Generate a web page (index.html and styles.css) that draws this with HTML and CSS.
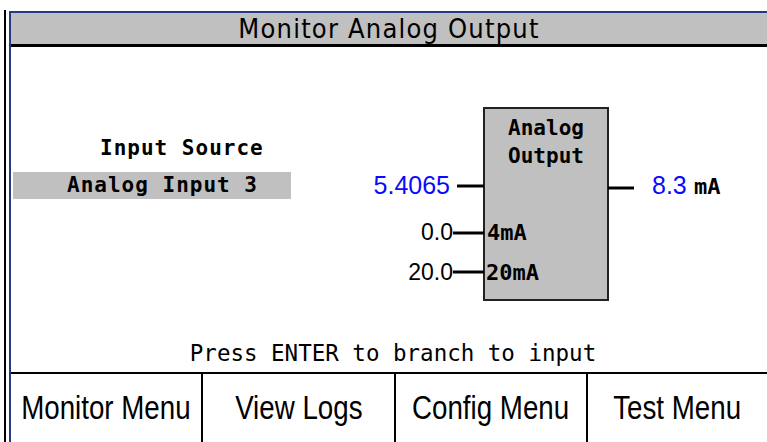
FILE: index.html
```html
<!DOCTYPE html>
<html>
<head>
    <title>Monitor Analog Output</title>
    <link rel="stylesheet" href="styles.css">
</head>
<body>
    <div class="device">
        <div class="screen">
            <div class="title">Monitor Analog Output</div>

            <div class="main">
                <div class="content">
                    <div class="source">
                        <div class="source-label">Input Source</div>
                        <div class="source-value">Analog Input 3</div>
                    </div>

                    <!-- function block: input -> analog output -> mA -->
                    <svg class="diagram" width="476" height="270" viewBox="0 0 476 270">
                        <rect class="block" x="193" y="61" width="124" height="192" />
                        <text class="label" x="255" y="88" text-anchor="middle">Analog</text>
                        <text class="label" x="255" y="116" text-anchor="middle">Output</text>

                        <line class="wire" x1="166" y1="139" x2="193" y2="139" />
                        <text class="num live" x="159" y="147" text-anchor="end">5.4065</text>

                        <line class="wire" x1="317" y1="141" x2="343" y2="141" />
                        <text class="num live" x="361" y="147">8.3</text>
                        <text class="unit" x="403" y="147">mA</text>

                        <line class="wire" x1="162" y1="186" x2="193" y2="186" />
                        <text class="num small" x="162" y="193" text-anchor="end">0.0</text>
                        <text class="unit" x="196" y="193">4mA</text>

                        <line class="wire" x1="162" y1="225" x2="193" y2="225" />
                        <text class="num small" x="162" y="233" text-anchor="end">20.0</text>
                        <text class="unit" x="195" y="233">20mA</text>
                    </svg>
                </div>
                <div class="prompt">Press ENTER to branch to input</div>
            </div>

            <div class="softkeys">
                <div class="key"><span>Monitor Menu</span></div>
                <div class="key"><span>View Logs</span></div>
                <div class="key"><span>Config Menu</span></div>
                <div class="key"><span>Test Menu</span></div>
            </div>
        </div>
    </div>
</body>
</html>
```

FILE: styles.css
```css
body {
    margin: 0;
    background: #fff;
    overflow: hidden;
    font-family: "DejaVu Sans Mono", monospace;
    color: #000;
}

.device {
    margin: 10px 0 0 4px;
    padding: 1px 0 0 3px;
    height: 432px;
    box-sizing: border-box;
    border-left: 2px solid #000;
}

.screen {
    height: 431px;
    box-sizing: border-box;
    border-left: 2px solid #24398a;
    border-top: 2px solid #24398a;
    display: flex;
    flex-direction: column;
}

.title {
    height: 31px;
    line-height: 31px;
    background: #c0c0c0;
    border-bottom: 3px solid #000;
    text-align: center;
    font-family: "DejaVu Sans Condensed", "DejaVu Sans", sans-serif;
    font-size: 27px;
    letter-spacing: 1.2px;
}

.main {
    height: 325px;
    flex-shrink: 0;
    border-bottom: 2px solid #000;
    display: flex;
    flex-direction: column;
}

.content {
    flex: 1;
    display: flex;
}

.source {
    width: 280px;
    flex-shrink: 0;
    padding-top: 89px;
    font-size: 21px;
    font-weight: bold;
    letter-spacing: 1px;
}

.source-label {
    padding-left: 89px;
    line-height: 24px;
}

.source-value {
    margin: 12px 0 0 2px;
    width: 278px;
    height: 27px;
    line-height: 27px;
    padding-left: 54px;
    box-sizing: border-box;
    background: #c0c0c0;
}

.diagram {
    display: block;
}

.block {
    fill: #c0c0c0;
    stroke: #222;
    stroke-width: 2;
}

.wire {
    stroke: #000;
    stroke-width: 3;
}

.label {
    font-family: "DejaVu Sans Mono", monospace;
    font-size: 21px;
    font-weight: bold;
}

.unit {
    font-family: "DejaVu Sans Mono", monospace;
    font-size: 22px;
    font-weight: bold;
}

.num {
    font-family: "Liberation Sans", Arial, sans-serif;
}

.live {
    font-size: 25px;
    fill: #0a0aff;
}

.small {
    font-size: 23px;
}

.prompt {
    line-height: 24px;
    padding: 0 0 7px 8px;
    text-align: center;
    font-size: 22.5px;
}

.softkeys {
    flex: 1;
    display: grid;
    grid-template-columns: 190px 193px 192px 1fr;
}

.key {
    text-align: center;
    line-height: 68px;
    font-family: "Liberation Sans", Arial, sans-serif;
    font-size: 33px;
    white-space: nowrap;
    overflow: hidden;
}

.key span {
    display: inline-block;
    margin: 0 -16px;
    transform: scaleX(0.84);
}

.key + .key {
    border-left: 2px solid #000;
}
```
